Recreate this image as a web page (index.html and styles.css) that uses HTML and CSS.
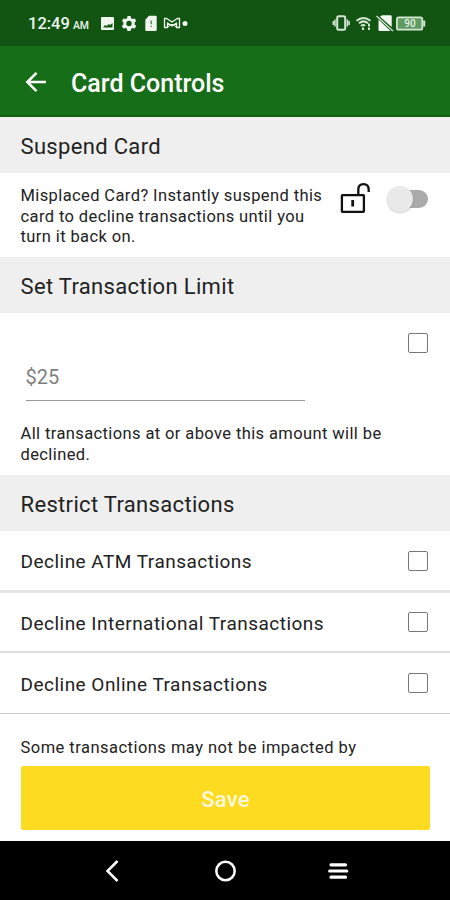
FILE: index.html
```html
<!DOCTYPE html>
<html lang="en">
<head>
<meta charset="utf-8">
<title>Card Controls</title>
<link rel="stylesheet" href="styles.css">
</head>
<body>
<div class="screen">
  <div class="status">
    <span class="time">12:49<small>AM</small></span>
    <svg class="status-left" width="90" height="20" viewBox="0 0 90 20" fill="#eef6ee">
      <path fill-rule="evenodd" d="M2 3h11a1 1 0 0 1 1 1v11a1 1 0 0 1-1 1H2a1 1 0 0 1-1-1V4a1 1 0 0 1 1-1zM3 13.500h9.500V9L10 11 8.500 10 7 12 5 11z"/>
      <path fill-rule="evenodd" d="M27.500 2h3l.6 2.200 1.400.8 2.200-.6 1.500 2.600-1.600 1.600v1.800l1.600 1.600-1.500 2.600-2.200-.6-1.400.8-.6 2.200h-3l-.6-2.200-1.400-.8-2.200.6-1.500-2.600 1.600-1.600V8.600L22 7l1.500-2.600 2.200.6 1.400-.8zM29 6.800a2.700 2.700 0 1 0 0 5.400 2.700 2.700 0 0 0 0-5.400z"/>
      <path fill-rule="evenodd" d="M49 1.800h6.500a1.200 1.200 0 0 1 1.200 1.200v12.800a1.200 1.200 0 0 1-1.200 1.200h-9a1.200 1.200 0 0 1-1.200-1.200V5.700zM50.600 6.500v3.800h1V6.500zM50.600 11.800v1.300h1v-1.300z"/>
      <path d="M64.500 4.500v9h3V9l4.500 3 4.500-3v4.500h3v-9h-2.200L72 8l-5.300-3.500z" fill="none" stroke="#eef6ee" stroke-width="1.300" stroke-linejoin="round"/>
      <path d="M68 13l3-2.500h2l3 2.500" fill="none" stroke="#eef6ee" stroke-width="1"/>
      <circle cx="85" cy="9.500" r="2.500"/>
    </svg>
    <svg class="status-right" width="96" height="20" viewBox="0 0 96 20" fill="none" stroke="#d5e8d5">
      <g transform="translate(-2.300 0)">
        <rect x="7.500" y="2.300" width="8" height="13.400" rx="1.500" stroke-width="2"/>
        <path d="M5.300 5.500v7M3.600 7v4M17.700 5.500v7M19.400 7v4" stroke-width="1.500"/>
      </g>
      <g transform="translate(-2 0)">
        <path d="M26.500 6.700q7-5.500 14 0M29 9.300q4.500-3.800 9 0M31 12q2.500-2 4 0" stroke-width="2"/>
        <path d="M33 13.500v2.500M39 9.500v3M39 13.500v2.500" stroke-width="2"/>
      </g>
      <g transform="translate(-1 0)">
        <path d="M51 1.200h8.500a1.200 1.200 0 0 1 1.200 1.200V13L49 2.700zM47.500 5.500L59.500 17H48.700a1.200 1.200 0 0 1-1.200-1.200z" fill="#f5faf5" stroke="none"/>
        <path d="M45.500 2L62 17" stroke-width="1.300"/>
      </g>
      <rect x="64.900" y="3.300" width="25.400" height="12.400" rx="1.800" fill="#609b62" stroke-width="1.700"/>
      <path d="M92.200 6.500v6" stroke-width="2"/>
      <text x="78" y="13" class="charge">90</text>
    </svg>
  </div>
  <header class="appbar">
    <svg width="22" height="22" viewBox="0 0 22 22" fill="none" stroke="#fff" stroke-width="2.500"><path d="M21 11H2.500M11.500 1.800L2.300 11l9.200 9.200"/></svg>
    <h1>Card Controls</h1>
  </header>
  <main>
    <h2>Suspend Card</h2>
    <section class="suspend">
      <p>Misplaced Card? Instantly suspend this<br>card to decline transactions until you<br>turn it back on.</p>
      <svg class="lock" width="30" height="32" viewBox="0 0 30 32" fill="none" stroke="#111" stroke-width="2.300"><rect x="1.900" y="13.200" width="22" height="16.600" rx=".5"/><path d="M18.300 13V7.800q0-5.600 5.200-5.600t5.200 5.600V10"/><path d="M12.700 18v6.500" stroke-width="2.800"/></svg>
      <div class="switch"><span></span></div>
    </section>
    <h2>Set Transaction Limit</h2>
    <section class="limit">
      <div class="limit-row"><div class="amount">$25</div><i class="check"></i></div>
      <p>All transactions at or above this amount will be<br>declined.</p>
    </section>
    <h2>Restrict Transactions</h2>
    <div class="option first"><span>Decline ATM Transactions</span><i class="check"></i></div>
    <div class="option second"><span>Decline International Transactions</span><i class="check"></i></div>
    <div class="option third"><span>Decline Online Transactions</span><i class="check"></i></div>
    <p class="note">Some transactions may not be impacted by</p>
    <div class="save">Save</div>
  </main>
  <nav>
    <svg width="22" height="24" viewBox="0 0 22 24" fill="none" stroke="#fff" stroke-width="2.500"><path d="M16.500 2L6.500 12l10 10"/></svg>
    <svg width="24" height="24" viewBox="0 0 24 24" fill="none" stroke="#fff" stroke-width="2.500"><circle cx="12.500" cy="12" r="9.200"/></svg>
    <svg width="22" height="24" viewBox="0 0 22 24" fill="none" stroke="#fff" stroke-width="3.200" stroke-linecap="round"><path d="M4 5.800h14.500M2.700 12h17.100M4 18.200h14.500"/></svg>
  </nav>
</div>
</body>
</html>
```

FILE: styles.css
```css
* { box-sizing: border-box; }
body { margin: 0; background: #fff; font-family: Roboto, "Liberation Sans", sans-serif; color: #222; }
h1, h2, p { margin: 0; }
.screen { width: 450px; height: 900px; display: flex; flex-direction: column; overflow: hidden; }
.status { height: 46px; background: #125512; display: flex; align-items: center; padding: 2px 22px 0 28px; flex: none; }
.time { color: #eef6ee; font-size: 16.500px; font-weight: 500; width: 72px; white-space: nowrap; line-height: 20px; padding-top: 1px; }
.time small { font-size: 10.500px; margin-left: 3px; }
.status-right { margin-left: auto; }
.charge { font-size: 10px; font-weight: 500; fill: #e5f2e5; stroke: none; text-anchor: middle; }
.appbar { height: 71px; background: #176e18; border-bottom: 2px solid #10600f; display: flex; align-items: center; padding: 2px 25px 0; gap: 24px; flex: none; }
h1 { color: #fff; font-size: 25px; font-weight: 500; line-height: 30px; white-space: nowrap; padding-top: 4px; }
main { flex: 1; display: flex; flex-direction: column; }
h2 { height: 56px; line-height: 59px; padding-left: 20.500px; background: #efefef; font-size: 22px; font-weight: 400; letter-spacing: .33px; white-space: nowrap; }
p { font-size: 16.500px; line-height: 20.700px; letter-spacing: .39px; white-space: nowrap; }
.suspend { height: 84px; display: flex; align-items: flex-start; padding: 13px 22.500px 0 20.500px; }
.suspend p { width: 319.500px; }
.lock { margin-top: -4px; }
.switch { width: 36px; height: 18px; margin: 4px 0 0 auto; border-radius: 9px; background: #aaa; }
.switch span { display: block; width: 26px; height: 26px; margin: -4px 0 0 -5px; border-radius: 50%; background: #e9e9e9; box-shadow: 0 1px 2px rgba(0,0,0,.2); }
.limit { height: 162px; padding: 20px 22px 0 20.500px; }
.limit-row { display: flex; justify-content: space-between; height: 91px; }
.amount { width: 279px; height: 68px; margin-left: 5px; padding-top: 32px; border-bottom: 1.500px solid #999; color: #808080; font-size: 20px; line-height: 25px; letter-spacing: 0; }
.check { display: block; width: 20px; height: 20px; border: 1.500px solid #777; border-radius: 2px; flex: none; }
.option { display: flex; align-items: center; justify-content: space-between; padding: 2px 22px 0 20.500px; font-size: 19px; letter-spacing: .48px; white-space: nowrap; }
.option .check { position: relative; top: -1px; }
.first { height: 62px; border-bottom: 3px solid #e5e5e5; }
.second { height: 60px; border-bottom: 2px solid #dedede; }
.third { height: 61px; border-bottom: 1px solid #ccc; }
.note { padding: 23.500px 0 0 20.500px; height: 52px; letter-spacing: .47px; }
.save { height: 64px; margin: 0 20px 0 21px; background: #fddb20; border-radius: 2px; color: #fff9dc; font-size: 22px; font-weight: 500; line-height: 67px; text-align: center; letter-spacing: .2px; }
nav { height: 59px; background: #000; display: flex; align-items: center; justify-content: space-between; padding: 0 101px; flex: none; }
```
